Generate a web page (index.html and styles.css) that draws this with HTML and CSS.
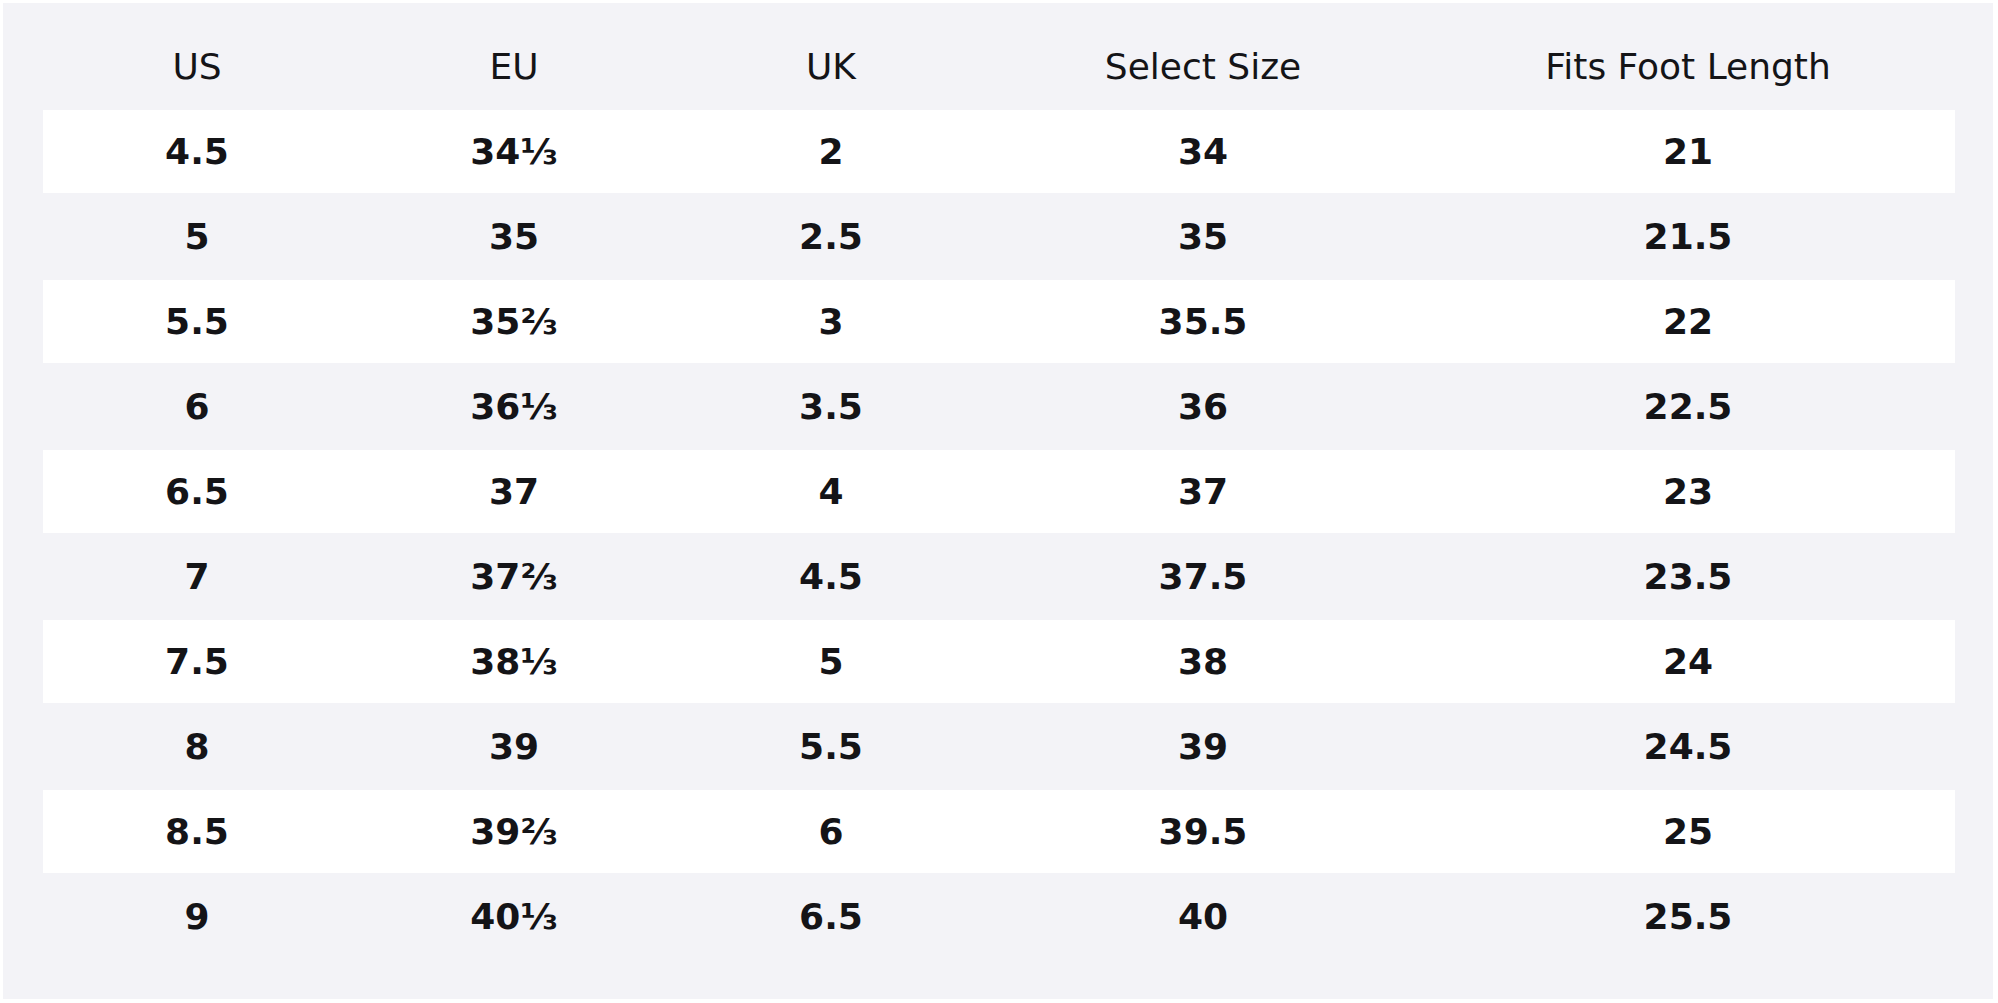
FILE: index.html
```html
<!DOCTYPE html>
<html lang="en">
<head>
<meta charset="utf-8">
<title>Size Chart</title>
<link rel="stylesheet" href="styles.css">
</head>
<body>
<div class="page">
  <div class="panel">
    <div class="chart">
      <div class="row head">
        <div class="cell">US</div><div class="cell">EU</div><div class="cell">UK</div><div class="cell">Select Size</div><div class="cell">Fits Foot Length</div>
      </div>
      <div class="row odd"><div class="cell">4.5</div><div class="cell">34⅓</div><div class="cell">2</div><div class="cell">34</div><div class="cell">21</div></div>
      <div class="row"><div class="cell">5</div><div class="cell">35</div><div class="cell">2.5</div><div class="cell">35</div><div class="cell">21.5</div></div>
      <div class="row odd"><div class="cell">5.5</div><div class="cell">35⅔</div><div class="cell">3</div><div class="cell">35.5</div><div class="cell">22</div></div>
      <div class="row"><div class="cell">6</div><div class="cell">36⅓</div><div class="cell">3.5</div><div class="cell">36</div><div class="cell">22.5</div></div>
      <div class="row odd"><div class="cell">6.5</div><div class="cell">37</div><div class="cell">4</div><div class="cell">37</div><div class="cell">23</div></div>
      <div class="row"><div class="cell">7</div><div class="cell">37⅔</div><div class="cell">4.5</div><div class="cell">37.5</div><div class="cell">23.5</div></div>
      <div class="row odd"><div class="cell">7.5</div><div class="cell">38⅓</div><div class="cell">5</div><div class="cell">38</div><div class="cell">24</div></div>
      <div class="row"><div class="cell">8</div><div class="cell">39</div><div class="cell">5.5</div><div class="cell">39</div><div class="cell">24.5</div></div>
      <div class="row odd"><div class="cell">8.5</div><div class="cell">39⅔</div><div class="cell">6</div><div class="cell">39.5</div><div class="cell">25</div></div>
      <div class="row"><div class="cell">9</div><div class="cell">40⅓</div><div class="cell">6.5</div><div class="cell">40</div><div class="cell">25.5</div></div>
    </div>
  </div>
</div>
</body>
</html>
```

FILE: styles.css
```css
html, body {
  margin: 0;
  padding: 0;
  background: #ffffff;
}
body {
  font-family: "DejaVu Sans", "Liberation Sans", sans-serif;
  color: #141417;
}
.page {
  padding: 3px 5px 4px 3px;
}
.panel {
  background: #f3f3f7;
  height: 996px;
  box-sizing: border-box;
  padding: 22px 38px 0 40px;
}
.chart {
  display: flex;
  flex-direction: column;
  gap: 2px;
}
.row {
  display: grid;
  grid-template-columns: 308px 326px 308px 436px 1fr;
  height: 83px;
  align-items: center;
  font-size: 36px;
  font-weight: 700;
}
.row.head {
  font-weight: 400;
}
.row.odd {
  background: #ffffff;
}
.cell {
  text-align: center;
  white-space: nowrap;
}
```
